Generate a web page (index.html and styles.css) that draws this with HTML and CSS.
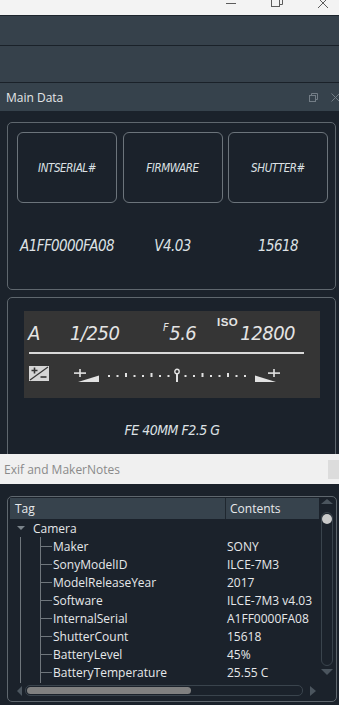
FILE: index.html
```html
<!DOCTYPE html>
<html lang="en">

<head>
    <meta charset="UTF-8">
    <meta name="viewport" content="width=device-width, initial-scale=1.0">
    <link rel="stylesheet" href="styles.css">
</head>

<body>
    <div class="app">
        <div class="win-bar">
            <span class="win-btn">
                <svg class="ico-min" width="10" height="10" viewBox="0 0 10 10"><path d="M0 5.5h10" stroke="#5c5c5c" /></svg>
            </span>
            <span class="win-btn">
                <svg class="ico-restore" width="12" height="10" viewBox="0 0 12 10"><rect x="0.5" y="2.5" width="8" height="7" fill="none" stroke="#5c5c5c" /><path d="M2.5 2.5V0.5h9v7h-3" fill="none" stroke="#5c5c5c" /></svg>
            </span>
            <span class="win-btn win-close">
                <svg class="ico-close" width="10" height="10" viewBox="0 0 10 10"><path d="M0 0l10 10M10 0L0 10" stroke="#5c5c5c" /></svg>
            </span>
        </div>
        <div class="toolbar tb-one"></div>
        <div class="toolbar tb-two"></div>

        <div class="dock">
            <div class="dock-title">
                <span>Main Data</span>
                <span class="dock-icons">
                    <svg width="10" height="9" viewBox="0 0 10 9"><rect x="0.5" y="2.5" width="6" height="6" fill="none" stroke="#737d86" /><path d="M2.5 2.5V0.5h6v6h-2" fill="none" stroke="#737d86" /></svg>
                    <svg width="9" height="9" viewBox="0 0 9 9"><path d="M0.5 0.5l8 8M8.5 0.5l-8 8" stroke="#737d86" /></svg>
                </span>
            </div>
            <div class="main-body">
                <div class="panel id-panel">
                    <div class="id-grid">
                        <div class="id-box lcd-text">INTSERIAL#</div>
                        <div class="id-box lcd-text">FIRMWARE</div>
                        <div class="id-box lcd-text">SHUTTER#</div>
                        <div class="id-value lcd-text">A1FF0000FA08</div>
                        <div class="id-value lcd-text">V4.03</div>
                        <div class="id-value lcd-text">15618</div>
                    </div>
                </div>

                <div class="panel lcd-panel">
                    <div class="lcd">
                        <div class="lcd-top lcd-text">
                            <div class="lcd-cell">A</div>
                            <div class="lcd-cell">1/250</div>
                            <div class="lcd-cell"><span class="lcd-f">F</span>5.6</div>
                            <div class="lcd-cell"><span class="lcd-iso">ISO</span>12800</div>
                        </div>
                        <div class="lcd-rule"></div>
                        <div class="lcd-ev">
                            <svg width="20" height="15" viewBox="0 0 20 15">
                                <rect x="0" y="0" width="20" height="15" fill="#d6d6d6" />
                                <path d="M1 14L19 1" stroke="#353535" stroke-width="1.2" />
                                <path d="M2.5 4.5h6M5.5 1.5v6" stroke="#353535" stroke-width="1.6" />
                                <path d="M11.5 11h6" stroke="#353535" stroke-width="1.6" />
                            </svg>
                            <svg class="ev-scale" width="210" height="16" viewBox="0 0 210 16">
                                <g fill="#e2e2e2">
                                    <rect x="0" y="4.3" width="12" height="1.6" />
                                    <rect x="5.2" y="1" width="1.6" height="8" />
                                    <polygon points="4,14 25,7.5 25,14" />
                                    <rect x="34" y="7" width="2" height="2" />
                                    <rect x="42.5" y="7" width="2" height="2" />
                                    <rect x="51" y="5" width="2" height="4" />
                                    <rect x="59.5" y="7" width="2" height="2" />
                                    <rect x="68" y="7" width="2" height="2" />
                                    <rect x="76.5" y="5" width="2" height="4" />
                                    <rect x="85" y="7" width="2" height="2" />
                                    <rect x="93.5" y="7" width="2" height="2" />
                                    <rect x="102" y="6" width="2" height="8" />
                                    <rect x="110.5" y="7" width="2" height="2" />
                                    <rect x="119" y="7" width="2" height="2" />
                                    <rect x="127.5" y="5" width="2" height="4" />
                                    <rect x="136" y="7" width="2" height="2" />
                                    <rect x="144.5" y="7" width="2" height="2" />
                                    <rect x="153" y="5" width="2" height="4" />
                                    <rect x="161.5" y="7" width="2" height="2" />
                                    <rect x="170" y="7" width="2" height="2" />
                                    <polygon points="181,7.5 181,14 202,14" />
                                    <rect x="194" y="4.3" width="12" height="1.6" />
                                    <rect x="199.2" y="1" width="1.6" height="8" />
                                </g>
                                <circle cx="103" cy="3.5" r="2.2" fill="none" stroke="#e2e2e2" stroke-width="1.4" />
                            </svg>
                        </div>
                    </div>
                    <div class="lens lcd-text">FE 40MM F2.5 G</div>
                </div>
            </div>
        </div>

        <div class="dock">
            <div class="dock-title dock-title-light">
                <span>Exif and MakerNotes</span>
                <span class="float-btn"></span>
            </div>
            <div class="exif-body">
                <div class="panel tree-panel">
                    <div class="tree-main">
                        <div class="tree-head">
                            <span class="col-tag">Tag</span>
                            <span class="col-val">Contents</span>
                        </div>
                        <div class="tree-rows">
                            <div class="tree-row tree-group"><span class="caret"></span>Camera</div>
                            <div class="tree-row tree-child"><span class="tag">Maker</span><span class="val">SONY</span></div>
                            <div class="tree-row tree-child"><span class="tag">SonyModelID</span><span class="val">ILCE-7M3</span></div>
                            <div class="tree-row tree-child"><span class="tag">ModelReleaseYear</span><span class="val">2017</span></div>
                            <div class="tree-row tree-child"><span class="tag">Software</span><span class="val">ILCE-7M3 v4.03</span></div>
                            <div class="tree-row tree-child"><span class="tag">InternalSerial</span><span class="val">A1FF0000FA08</span></div>
                            <div class="tree-row tree-child"><span class="tag">ShutterCount</span><span class="val">15618</span></div>
                            <div class="tree-row tree-child"><span class="tag">BatteryLevel</span><span class="val">45%</span></div>
                            <div class="tree-row tree-child"><span class="tag">BatteryTemperature</span><span class="val">25.55 C</span></div>
                        </div>
                    </div>
                    <div class="vscroll">
                        <span class="arrow-up"></span>
                        <div class="vtrack"><span class="vthumb"></span></div>
                        <span class="arrow-down"></span>
                    </div>
                    <div class="hscroll">
                        <span class="arrow-left"></span>
                        <div class="htrack"><span class="hthumb"></span></div>
                        <span class="arrow-right"></span>
                    </div>
                </div>
            </div>
        </div>
    </div>
</body>

</html>
```

FILE: styles.css
```css
* {
    box-sizing: border-box;
}

body {
    margin: 0;
    background-color: #1b222b;
    font-family: 'Open Sans', 'Noto Sans', sans-serif;
    font-size: 12px;
}

.app {
    width: 339px;
    height: 705px;
    overflow: hidden;
    display: flex;
    flex-direction: column;
}

/* window chrome */
.win-bar {
    height: 16px;
    flex: none;
    background-color: #f3f3f3;
    border-bottom: 1px solid #1d252d;
    display: flex;
    justify-content: flex-end;
    overflow: hidden;
}

.win-btn {
    width: 46px;
    flex: none;
    display: flex;
    justify-content: center;
    align-items: flex-start;
}

.win-close {
    margin-right: -7px;
}

.ico-min,
.ico-close {
    margin-top: -2px;
}

.ico-restore {
    margin-top: -3px;
}

.toolbar {
    flex: none;
    background-color: #36414b;
    border-bottom: 1px solid #1a2129;
}

.tb-one {
    height: 30px;
}

.tb-two {
    height: 37px;
}

/* dock windows */
.dock {
    flex: none;
    display: flex;
    flex-direction: column;
}

.dock-title {
    height: 28px;
    padding: 0 0 0 6px;
    background-color: #36424c;
    color: #e4e6e8;
    display: flex;
    align-items: center;
    justify-content: space-between;
    overflow: hidden;
}

.dock-icons {
    display: flex;
    align-items: center;
    gap: 12px;
    margin-right: -1px;
}

.dock-title-light {
    height: 30px;
    padding-left: 4px;
    background-color: #f0f0f0;
    color: #8a8a8a;
}

.float-btn {
    width: 14px;
    height: 19px;
    margin-right: -3px;
    background-color: #dcdcdc;
}

.main-body {
    height: 343px;
    padding: 11px 3px 0 7px;
    overflow: hidden;
    background-color: #1b222b;
    display: flex;
    flex-direction: column;
    gap: 7px;
}

.panel {
    flex: none;
    border: 1px solid #5f676e;
    border-radius: 5px;
}

.lcd-text {
    font-family: 'DejaVu Sans', sans-serif;
    font-stretch: condensed;
    font-style: italic;
    color: #dde1e4;
}

/* serial / firmware / shutter */
.id-panel {
    height: 168px;
    padding: 9px 8px 0 9px;
}

.id-grid {
    display: grid;
    grid-template-columns: repeat(3, 100px);
    grid-template-rows: 71px 86px;
    column-gap: 5.5px;
}

.id-box {
    border: 1px solid #6c747b;
    border-radius: 6px;
    display: flex;
    align-items: center;
    justify-content: center;
    font-size: 11.5px;
    letter-spacing: -0.4px;
    padding-top: 1px;
}

.id-value {
    display: flex;
    align-items: center;
    justify-content: center;
    font-size: 15px;
    letter-spacing: -0.6px;
}

/* camera lcd */
.lcd-panel {
    height: 170px;
    padding: 13px 15px 0 16px;
}

.lcd {
    height: 87px;
    background-color: #353535;
    display: flex;
    flex-direction: column;
}

.lcd-top {
    height: 32px;
    padding-left: 4px;
    display: grid;
    grid-template-columns: 42px 93px 54px auto;
    align-items: end;
    font-size: 20px;
    line-height: 20px;
    color: #e4e4e4;
}

.lcd-cell {
    white-space: nowrap;
    letter-spacing: -0.5px;
}

.lcd-f {
    font-size: 11px;
    vertical-align: 9px;
    margin-right: 1px;
}

.lcd-iso {
    font-family: 'Liberation Sans', sans-serif;
    font-style: normal;
    font-weight: bold;
    font-size: 11.5px;
    vertical-align: 14px;
    margin-right: 2px;
    letter-spacing: 0.5px;
}

.lcd-rule {
    height: 1.5px;
    margin: 9px 16px 0 5px;
    background-color: #d9d9d9;
}

.lcd-ev {
    margin-top: 12px;
    padding-left: 5px;
    display: flex;
    align-items: flex-start;
    gap: 25px;
}

.ev-scale {
    margin-top: 2px;
}

.lens {
    margin-top: 24px;
    text-align: center;
    font-size: 14px;
    letter-spacing: -0.5px;
}

/* exif tree */
.exif-body {
    height: 220px;
    padding: 12px 2px 0 7px;
    background-color: #1b222b;
}

.tree-panel {
    height: 206px;
    padding: 1px 2px 4px 2px;
    display: grid;
    grid-template-columns: 309px 14px;
    grid-template-rows: 185px 14px;
    column-gap: 1px;
}

.tree-main {
    overflow: hidden;
}

.tree-head {
    height: 21px;
    background-color: #37434d;
    color: #e8eaec;
    display: flex;
    align-items: center;
}

.col-tag {
    width: 216px;
    padding-left: 5px;
    border-right: 1px solid #1f272f;
    height: 100%;
    display: flex;
    align-items: center;
}

.col-val {
    padding-left: 4px;
}

.tree-rows {
    height: 164px;
    background:
        linear-gradient(#6f767c, #6f767c) 10px 18px / 1px 100% no-repeat,
        linear-gradient(#6f767c, #6f767c) 30px 18px / 1px 100% no-repeat;
}

.tree-row {
    height: 18px;
    display: flex;
    align-items: center;
    color: #e6e8ea;
    white-space: nowrap;
}

.tree-group {
    padding-left: 7px;
}

.caret {
    width: 8px;
    height: 4px;
    border-left: 4px solid transparent;
    border-right: 4px solid transparent;
    border-top: 4px solid #7b848b;
    margin-right: 8px;
}

.tree-child {
    background: linear-gradient(#6f767c, #6f767c) 30px 50% / 12px 1px no-repeat;
}

.tag {
    width: 217px;
    padding-left: 43px;
}

.vscroll {
    display: flex;
    flex-direction: column;
    align-items: center;
}

.arrow-up,
.arrow-down {
    width: 12px;
    border-left: 6px solid transparent;
    border-right: 6px solid transparent;
}

.arrow-up {
    height: 5px;
    margin-top: 1px;
    border-bottom: 5px solid #4b555e;
}

.arrow-down {
    height: 6px;
    margin-top: 3px;
    border-top: 6px solid #4b555e;
}

.vtrack {
    width: 12px;
    height: 154px;
    margin-top: 8px;
    border: 1px solid #3a444d;
    border-radius: 6px;
    padding-top: 1px;
    display: flex;
    justify-content: center;
}

.vthumb {
    width: 10px;
    height: 10px;
    border-radius: 50%;
    background-color: #c9c9c9;
}

.hscroll {
    padding: 2px 0 0 7px;
    display: flex;
    align-items: flex-start;
}

.arrow-left,
.arrow-right {
    height: 10px;
    margin-top: 1px;
    border-top: 5px solid transparent;
    border-bottom: 5px solid transparent;
}

.arrow-left {
    width: 5px;
    border-right: 5px solid #4b555e;
}

.arrow-right {
    width: 6px;
    margin-left: 7px;
    border-left: 6px solid #4b555e;
}

.htrack {
    width: 278px;
    height: 11px;
    margin-left: 3px;
    border: 1px solid #3a444d;
    border-radius: 5px;
    padding: 1px;
}

.hthumb {
    display: block;
    width: 164px;
    height: 7px;
    border-radius: 4px;
    background-color: #808080;
}
```
